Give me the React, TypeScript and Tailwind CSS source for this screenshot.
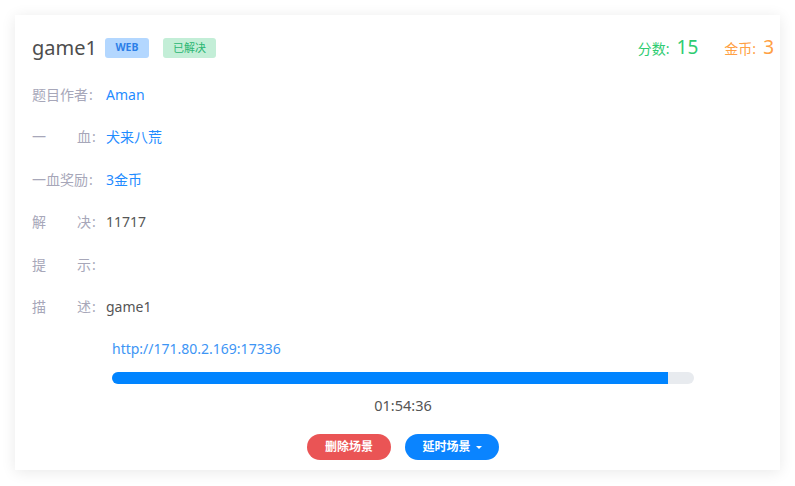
const FONT = "font-['Noto_Sans','Noto_Sans_CJK_SC',sans-serif]";

/* ─── INFO ROW ──────────────────────────────────── */
interface InfoRowProps {
    label: [string, string] | string;
    value?: string;
    blue?: boolean;
}

const InfoRow: React.FC<InfoRowProps> = ({ label, value, blue }) => (
    <div className="flex h-[42.5px] items-center text-[14px]">
        <div className="flex w-[65px] items-center text-[#a7a7b9]">
            {Array.isArray(label) ? (
                <div className="flex w-[59px] justify-between">
                    <span>{label[0]}</span>
                    <span>{label[1]}</span>
                </div>
            ) : (
                <span>{label}</span>
            )}
            <span className="ml-[1px]">:</span>
        </div>
        {value && <span className={`ml-[9px] ${blue ? "text-[#1f8cff]" : "text-[#555]"}`}>{value}</span>}
    </div>
);

export default function App() {
    return (
        <div className={`min-h-[486px] w-[795px] bg-white pt-[15px] pl-[15px] ${FONT}`}>
            <div className="w-[765px] bg-white pl-[17px] pr-[6px] pt-[20px] pb-[10px] shadow-[0_2px_14px_rgba(0,0,0,0.09)]">
                {/* header */}
                <div className="flex h-[26px] items-center justify-between">
                    <div className="flex items-center">
                        <h3 className="text-[20px] leading-none text-[#4d4d4d]">game1</h3>
                        <span className="ml-[8px] flex h-[20px] w-[44px] items-center justify-center rounded-[3px] bg-[#b3d7ff] text-[10.5px] font-bold text-[#2c7fe8]">
                            WEB
                        </span>
                        <span className="ml-[14px] flex h-[20px] w-[53px] items-center justify-center rounded-[3px] bg-[#c3eed7] text-[11px] text-[#2bb673]">
                            已解决
                        </span>
                    </div>
                    <div className="flex items-baseline">
                        <span className="text-[14px] text-[#2ecc71]">分数:</span>
                        <span className="ml-[7px] text-[19px] leading-none text-[#2ecc71]">15</span>
                        <span className="ml-[26px] text-[14px] text-[#ff9f43]">金币:</span>
                        <span className="ml-[7px] text-[19px] leading-none text-[#ff9f43]">3</span>
                    </div>
                </div>

                {/* details */}
                <div className="mt-[12px]">
                    <InfoRow label="题目作者" value="Aman" blue />
                    <InfoRow label={["一", "血"]} value="犬来八荒" blue />
                    <InfoRow label="一血奖励" value="3金币" blue />
                    <InfoRow label={["解", "决"]} value="11717" />
                    <InfoRow label={["提", "示"]} />
                    <InfoRow label={["描", "述"]} value="game1" />
                </div>

                {/* scene */}
                <div className="mx-[80px] mt-[11px]">
                    <div className="text-[14px] leading-[20px] text-[#3d95f5]">http://171.80.2.169:17336</div>
                    <div className="mt-[13px] h-[12px] w-full overflow-hidden rounded-full bg-[#e8ebef]">
                        <div className="h-full bg-[#0084ff]" style={{ width: `${(556 / 582) * 100}%` }} />
                    </div>
                    <div className="mt-[11px] text-center text-[14.5px] leading-[20px] text-[#555]">01:54:36</div>
                </div>

                <div className="mt-[19px] flex justify-center gap-[14px]">
                    <button className="h-[26px] w-[84px] rounded-full bg-[#ea5455] text-[12px] font-bold text-white">
                        删除场景
                    </button>
                    <button className="flex h-[26px] w-[94px] items-center justify-center gap-[5px] rounded-full bg-[#0a84ff] text-[12px] font-bold text-white">
                        延时场景
                        <span className="h-0 w-0 border-x-[3px] border-t-[3px] border-x-transparent border-t-white" />
                    </button>
                </div>
            </div>
        </div>
    );
}
